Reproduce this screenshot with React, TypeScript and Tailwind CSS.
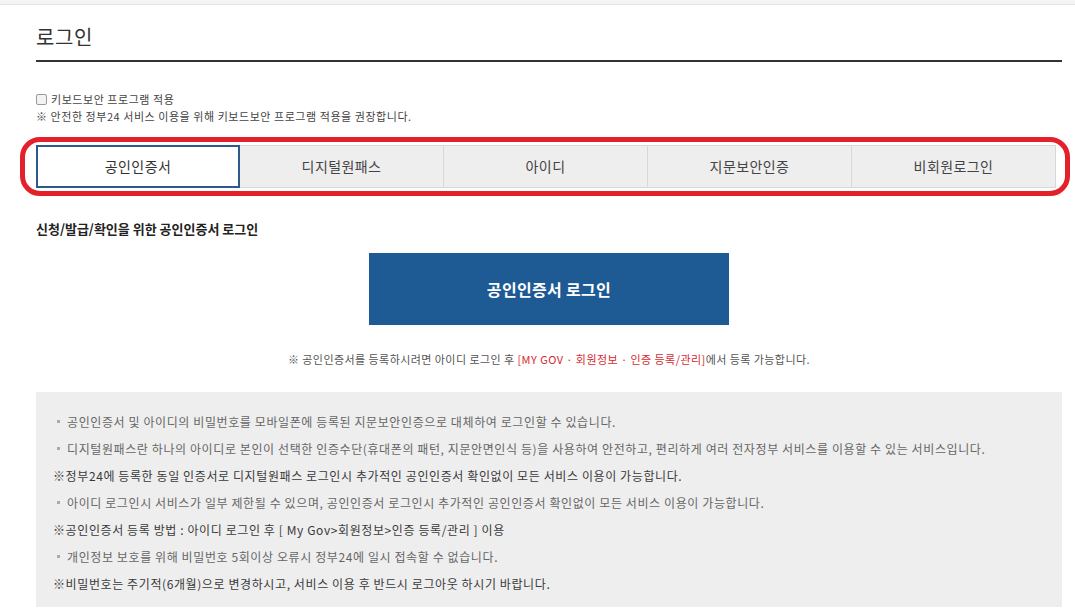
const tabs = ['공인인증서', '디지털원패스', '아이디', '지문보안인증', '비회원로그인'];

type Note = { mark: 'dot' | 'ref'; text: string };

const notes: Note[] = [
  { mark: 'dot', text: '공인인증서 및 아이디의 비밀번호를 모바일폰에 등록된 지문보안인증으로 대체하여 로그인할 수 있습니다.' },
  { mark: 'dot', text: '디지털원패스란 하나의 아이디로 본인이 선택한 인증수단(휴대폰의 패턴, 지문안면인식 등)을 사용하여 안전하고, 편리하게 여러 전자정부 서비스를 이용할 수 있는 서비스입니다.' },
  { mark: 'ref', text: '정부24에 등록한 동일 인증서로 디지털원패스 로그인시 추가적인 공인인증서 확인없이 모든 서비스 이용이 가능합니다.' },
  { mark: 'dot', text: '아이디 로그인시 서비스가 일부 제한될 수 있으며, 공인인증서 로그인시 추가적인 공인인증서 확인없이 모든 서비스 이용이 가능합니다.' },
  { mark: 'ref', text: '공인인증서 등록 방법 : 아이디 로그인 후 [ My Gov>회원정보>인증 등록/관리 ] 이용' },
  { mark: 'dot', text: '개인정보 보호를 위해 비밀번호 5회이상 오류시 정부24에 일시 접속할 수 없습니다.' },
  { mark: 'ref', text: '비밀번호는 주기적(6개월)으로 변경하시고, 서비스 이용 후 반드시 로그아웃 하시기 바랍니다.' },
];

export default function App() {
  return (
    <div className="min-h-[615px] bg-white font-['Noto_Sans_CJK_KR','Noto_Sans',sans-serif] text-[#333]">
      <div className="h-[5px] border-b border-[#e4e4e4] bg-[#f4f4f4]" />

      <div className="ml-[36px] w-[1026px]">
        <h1 className="pt-[18px] text-[20px] leading-[28px] tracking-[0.03em] text-[#333]">로그인</h1>
        <div className="mt-[9px] h-[2px] bg-[#333]" />

        <div className="mt-[29px] text-[11px] leading-[17px] tracking-[0.05em] text-[#444]">
          <label className="flex items-center gap-[4px]">
            <span className="h-[11px] w-[11px] rounded-[2px] border border-[#9a9a9a] bg-[#f3f3f3]" />
            <span>키보드보안 프로그램 적용</span>
          </label>
          <p>※ 안전한 정부24 서비스 이용을 위해 키보드보안 프로그램 적용을 권장합니다.</p>
        </div>

        <div className="relative mt-[20px] w-[1020px]">
          <ul className="flex h-[43px]">
            {tabs.map((t, i) => (
              <li
                key={t}
                className={
                  i === 0
                    ? 'flex w-[204px] items-center justify-center border-2 border-[#2c5b8b] bg-white text-[14px] tracking-[0.03em] text-[#333]'
                    : 'flex w-[204px] items-center justify-center border-y border-r border-[#d8d8d8] bg-[#eeeeee] text-[14px] tracking-[0.03em] text-[#444]'
                }
              >
                {t}
              </li>
            ))}
          </ul>
          <div className="pointer-events-none absolute -bottom-[8px] -left-[16px] -right-[14px] -top-[8px] rounded-[20px] border-[5px] border-[#e4202a]" />
        </div>

        <h2 className="mt-[31px] text-[13px] font-bold leading-[20px] text-[#222]">
          신청/발급/확인을 위한 공인인증서 로그인
        </h2>

        <div className="mt-[14px] flex justify-center">
          <button
            type="button"
            className="flex h-[72px] w-[360px] items-center justify-center bg-[#1e5a93] text-[16px] font-bold tracking-[0.02em] text-white"
          >
            공인인증서 로그인
          </button>
        </div>

        <p className="mt-[26px] text-center text-[11px] leading-[16px] tracking-[0.04em] text-[#555]">
          ※ 공인인증서를 등록하시려면 아이디 로그인 후{' '}
          <span className="text-[#d7282f]">[MY GOV · 회원정보 · 인증 등록/관리]</span>에서 등록 가능합니다.
        </p>

        <div className="mt-[25px] bg-[#eeeeee] pb-[10px] pt-[16px]">
          {notes.map((n) =>
            n.mark === 'dot' ? (
              <p key={n.text} className="flex items-center pl-[21px] text-[12px] leading-[27px] tracking-[0.05em] text-[#666]">
                <span className="mr-[7px] h-[3px] w-[3px] bg-[#aaa]" />
                {n.text}
              </p>
            ) : (
              <p key={n.text} className="pl-[17px] text-[12px] leading-[27px] tracking-[0.05em] text-[#3a3a3a]">
                ※{n.text}
              </p>
            )
          )}
        </div>
      </div>
    </div>
  );
}
